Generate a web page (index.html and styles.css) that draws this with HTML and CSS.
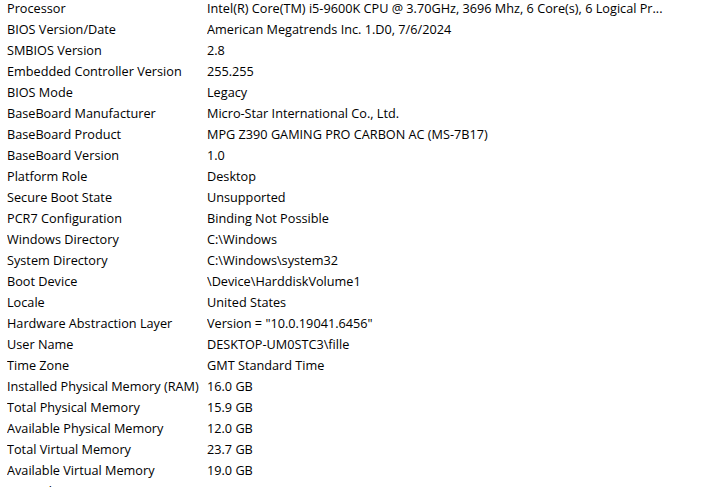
FILE: index.html
```html
<!DOCTYPE html>
<html lang="en">
<head>
<meta charset="utf-8">
<title>System Information</title>
<link rel="stylesheet" href="styles.css">
</head>
<body>
<div class="list">
  <div class="row"><span class="k">Processor</span><span class="v">Intel(R) Core(TM) i5-9600K CPU @ 3.70GHz, 3696 Mhz, 6 Core(s), 6 Logical Pr...</span></div>
  <div class="row"><span class="k">BIOS Version/Date</span><span class="v">American Megatrends Inc. 1.D0, 7/6/2024</span></div>
  <div class="row"><span class="k">SMBIOS Version</span><span class="v">2.8</span></div>
  <div class="row"><span class="k">Embedded Controller Version</span><span class="v">255.255</span></div>
  <div class="row"><span class="k">BIOS Mode</span><span class="v">Legacy</span></div>
  <div class="row"><span class="k">BaseBoard Manufacturer</span><span class="v">Micro-Star International Co., Ltd.</span></div>
  <div class="row"><span class="k">BaseBoard Product</span><span class="v">MPG Z390 GAMING PRO CARBON AC (MS-7B17)</span></div>
  <div class="row"><span class="k">BaseBoard Version</span><span class="v">1.0</span></div>
  <div class="row"><span class="k">Platform Role</span><span class="v">Desktop</span></div>
  <div class="row"><span class="k">Secure Boot State</span><span class="v">Unsupported</span></div>
  <div class="row"><span class="k">PCR7 Configuration</span><span class="v">Binding Not Possible</span></div>
  <div class="row"><span class="k">Windows Directory</span><span class="v">C:\Windows</span></div>
  <div class="row"><span class="k">System Directory</span><span class="v">C:\Windows\system32</span></div>
  <div class="row"><span class="k">Boot Device</span><span class="v">\Device\HarddiskVolume1</span></div>
  <div class="row"><span class="k">Locale</span><span class="v">United States</span></div>
  <div class="row"><span class="k">Hardware Abstraction Layer</span><span class="v">Version = "10.0.19041.6456"</span></div>
  <div class="row"><span class="k">User Name</span><span class="v">DESKTOP-UM0STC3\fille</span></div>
  <div class="row"><span class="k">Time Zone</span><span class="v">GMT Standard Time</span></div>
  <div class="row"><span class="k">Installed Physical Memory (RAM)</span><span class="v">16.0 GB</span></div>
  <div class="row"><span class="k">Total Physical Memory</span><span class="v">15.9 GB</span></div>
  <div class="row"><span class="k">Available Physical Memory</span><span class="v">12.0 GB</span></div>
  <div class="row"><span class="k">Total Virtual Memory</span><span class="v">23.7 GB</span></div>
  <div class="row"><span class="k">Available Virtual Memory</span><span class="v">19.0 GB</span></div>
  <div class="row"><span class="k">Page File Space</span><span class="v">3.75 GB</span></div>
</div>
</body>
</html>
```
FILE: styles.css
```css
html, body {
  margin: 0;
  padding: 0;
  background: #ffffff;
  overflow: hidden;
}
body {
  width: 723px;
  height: 487px;
  font-family: "Open Sans", "Noto Sans", sans-serif;
  font-size: 12.7px;
  color: #000000;
}
.list {
  display: flex;
  flex-direction: column;
  margin-top: -2px;
  padding-left: 7px;
}
.row {
  display: grid;
  grid-template-columns: 200px 1fr;
  height: 21px;
  line-height: 21px;
  white-space: nowrap;
}
.k, .v {
  overflow: hidden;
}
```
